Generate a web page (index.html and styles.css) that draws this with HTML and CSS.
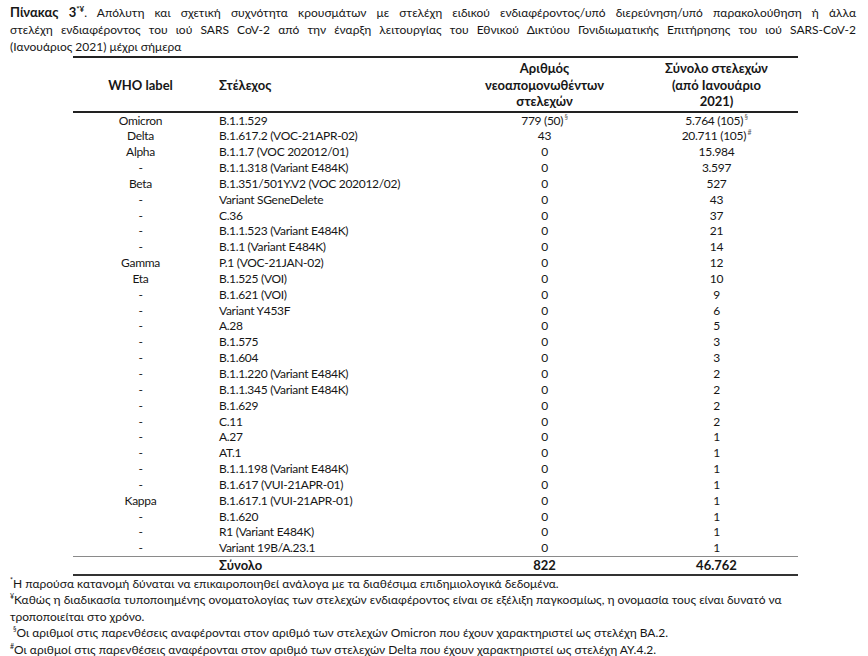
FILE: index.html
```html
<!DOCTYPE html>
<html lang="el">
<head>
<meta charset="utf-8">
<title>Πίνακας 3</title>
<link rel="stylesheet" href="styles.css">
</head>
<body>
<div class="page">
  <div class="title">
    <span class="tline just"><b>Πίνακας 3<sup>*¥</sup></b>. Απόλυτη και σχετική συχνότητα κρουσμάτων με στελέχη ειδικού ενδιαφέροντος/υπό διερεύνηση/υπό παρακολούθηση ή άλλα</span>
    <span class="tline just">στελέχη ενδιαφέροντος του ιού SARS CoV-2 από την έναρξη λειτουργίας του Εθνικού Δικτύου Γονιδιωματικής Επιτήρησης του ιού SARS-CoV-2</span>
    <span class="tline">(Ιανουάριος 2021) μέχρι σήμερα</span>
  </div>

  <table class="data">
    <colgroup>
      <col class="c1"><col class="c2"><col class="c3"><col class="c4">
    </colgroup>
    <thead>
      <tr>
        <th class="ctr">WHO label</th>
        <th class="lft">Στέλεχος</th>
        <th class="ctr">Αριθμός<br>νεοαπομονωθέντων<br>στελεχών</th>
        <th class="ctr n4">Σύνολο στελεχών<br>(από Ιανουάριο<br>2021)</th>
      </tr>
    </thead>
    <tbody>
      <tr><td>Omicron</td><td class="lft">B.1.1.529</td><td>779 (50)<sup class="mk"> §</sup></td><td class="n4">5.764 (105)<sup class="mk"> §</sup></td></tr>
      <tr><td>Delta</td><td class="lft">B.1.617.2 (VOC-21APR-02)</td><td>43</td><td class="n4">20.711 (105)<sup class="mk"> #</sup></td></tr>
      <tr><td>Alpha</td><td class="lft">B.1.1.7 (VOC 202012/01)</td><td>0</td><td class="n4">15.984</td></tr>
      <tr><td>-</td><td class="lft">B.1.1.318 (Variant E484K)</td><td>0</td><td class="n4">3.597</td></tr>
      <tr><td>Beta</td><td class="lft">B.1.351/501Y.V2 (VOC 202012/02)</td><td>0</td><td class="n4">527</td></tr>
      <tr><td>-</td><td class="lft">Variant SGeneDelete</td><td>0</td><td class="n4">43</td></tr>
      <tr><td>-</td><td class="lft">C.36</td><td>0</td><td class="n4">37</td></tr>
      <tr><td>-</td><td class="lft">B.1.1.523 (Variant E484K)</td><td>0</td><td class="n4">21</td></tr>
      <tr><td>-</td><td class="lft">B.1.1 (Variant E484K)</td><td>0</td><td class="n4">14</td></tr>
      <tr><td>Gamma</td><td class="lft">P.1 (VOC-21JAN-02)</td><td>0</td><td class="n4">12</td></tr>
      <tr><td>Eta</td><td class="lft">B.1.525 (VOI)</td><td>0</td><td class="n4">10</td></tr>
      <tr><td>-</td><td class="lft">B.1.621 (VOI)</td><td>0</td><td class="n4">9</td></tr>
      <tr><td>-</td><td class="lft">Variant Y453F</td><td>0</td><td class="n4">6</td></tr>
      <tr><td>-</td><td class="lft">A.28</td><td>0</td><td class="n4">5</td></tr>
      <tr><td>-</td><td class="lft">B.1.575</td><td>0</td><td class="n4">3</td></tr>
      <tr><td>-</td><td class="lft">B.1.604</td><td>0</td><td class="n4">3</td></tr>
      <tr><td>-</td><td class="lft">B.1.1.220 (Variant E484K)</td><td>0</td><td class="n4">2</td></tr>
      <tr><td>-</td><td class="lft">B.1.1.345 (Variant E484K)</td><td>0</td><td class="n4">2</td></tr>
      <tr><td>-</td><td class="lft">B.1.629</td><td>0</td><td class="n4">2</td></tr>
      <tr><td>-</td><td class="lft">C.11</td><td>0</td><td class="n4">2</td></tr>
      <tr><td>-</td><td class="lft">A.27</td><td>0</td><td class="n4">1</td></tr>
      <tr><td>-</td><td class="lft">AT.1</td><td>0</td><td class="n4">1</td></tr>
      <tr><td>-</td><td class="lft">B.1.1.198 (Variant E484K)</td><td>0</td><td class="n4">1</td></tr>
      <tr><td>-</td><td class="lft">B.1.617 (VUI-21APR-01)</td><td>0</td><td class="n4">1</td></tr>
      <tr><td>Kappa</td><td class="lft">B.1.617.1 (VUI-21APR-01)</td><td>0</td><td class="n4">1</td></tr>
      <tr><td>-</td><td class="lft">B.1.620</td><td>0</td><td class="n4">1</td></tr>
      <tr><td>-</td><td class="lft">R1 (Variant E484K)</td><td>0</td><td class="n4">1</td></tr>
      <tr><td>-</td><td class="lft">Variant 19B/A.23.1</td><td>0</td><td class="n4">1</td></tr>
    </tbody>
    <tfoot>
      <tr><td></td><td class="lft">Σύνολο</td><td>822</td><td class="n4">46.762</td></tr>
    </tfoot>
  </table>

  <div class="notes">
    <p class="note"><sup>*</sup>Η παρούσα κατανομή δύναται να επικαιροποιηθεί ανάλογα με τα διαθέσιμα επιδημιολογικά δεδομένα.</p>
    <p class="note"><sup>¥</sup>Καθώς η διαδικασία τυποποιημένης ονοματολογίας των στελεχών ενδιαφέροντος είναι σε εξέλιξη παγκοσμίως, η ονομασία τους είναι δυνατό να<br>τροποποιείται στο χρόνο.</p>
    <p class="note ind"><sup>§</sup>Οι αριθμοί στις παρενθέσεις αναφέρονται στον αριθμό των στελεχών Omicron που έχουν χαρακτηριστεί ως στελέχη ΒΑ.2.</p>
    <p class="note"><sup>#</sup>Οι αριθμοί στις παρενθέσεις αναφέρονται στον αριθμό των στελεχών Delta που έχουν χαρακτηριστεί ως στελέχη ΑΥ.4.2.</p>
  </div>
</div>
</body>
</html>
```

FILE: styles.css
```css
html, body {
  margin: 0;
  padding: 0;
  background: #ffffff;
}

body {
  font-family: "Lato", "Open Sans", sans-serif;
  font-size: 12px;
  letter-spacing: 0;
  color: #161616;
}

b, th, .data tfoot td {
  font-size: 13px;
  letter-spacing: 0;
}

.page {
  width: 846px;
  padding: 4px 0 0 10px;
}

.title {
  line-height: 17px;
}

.tline {
  display: block;
  white-space: nowrap;
}

.tline.just {
  white-space: normal;
  text-align: justify;
  text-align-last: justify;
}

.title sup {
  font-size: 8px;
  line-height: 0;
  vertical-align: 5px;
}

.data {
  border-collapse: collapse;
  margin: 1px 0 0 63px;
  width: 725px;
  table-layout: fixed;
}

.c1 { width: 135px; }
.c2 { width: 254px; }
.c3 { width: 165px; }
.c4 { width: 171px; }

.data th {
  font-weight: 700;
  line-height: 16.5px;
  padding: 2px 0 1px;
  vertical-align: middle;
  border-top: 2px solid #222;
  border-bottom: 2px solid #222;
}

.data td {
  text-align: center;
  line-height: 15.85px;
  padding: 0;
  white-space: nowrap;
  letter-spacing: -0.3px;
}

.data .ctr { text-align: center; }
.data .lft { text-align: left; padding-left: 11px; }
.data .n4 { padding-left: 8px; }

.data tfoot td {
  font-weight: 700;
  line-height: 16.5px;
  border-top: 1px solid #8a8a8a;
  border-bottom: 2px solid #333;
}

.mk {
  font-size: 7px;
  line-height: 0;
  vertical-align: 5px;
  color: #555;
}

.note {
  margin: 0;
  line-height: 16.6px;
}

.note.ind {
  padding-left: 3px;
}

.note sup {
  font-size: 7px;
  line-height: 0;
  vertical-align: 5px;
}
```
